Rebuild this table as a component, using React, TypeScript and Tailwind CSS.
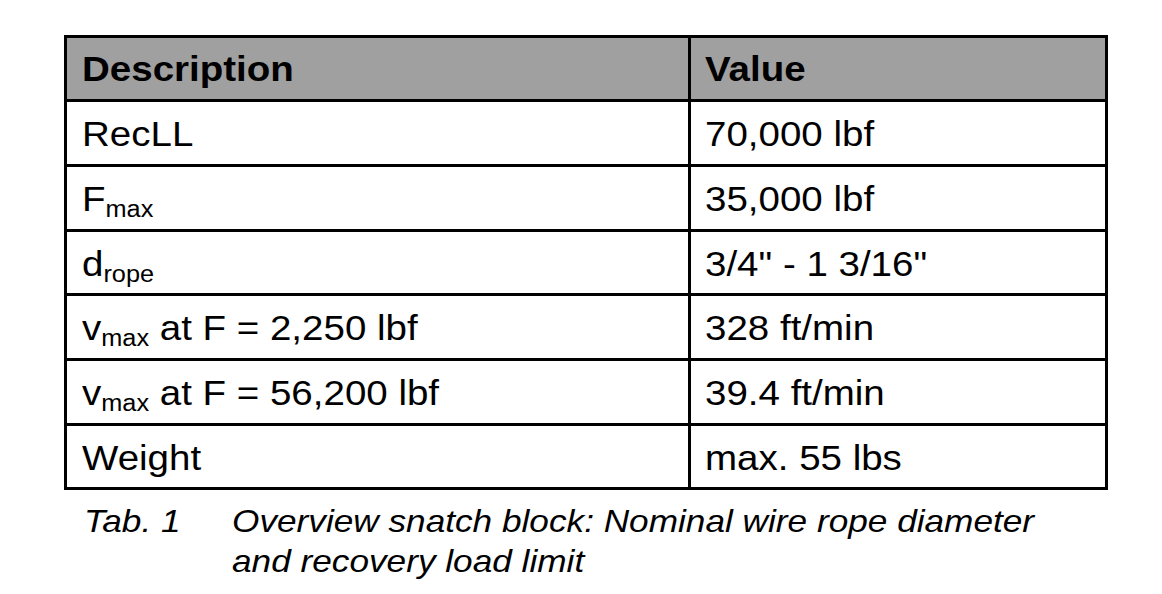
const rows: { label: React.ReactNode; value: string; h: string }[] = [
  { label: "RecLL", value: "70,000 lbf", h: "h-[65px]" },
  {
    label: (
      <>
        F<sub className="text-[23px]">max</sub>
      </>
    ),
    value: "35,000 lbf",
    h: "h-[65px]",
  },
  {
    label: (
      <>
        d<sub className="text-[23px]">rope</sub>
      </>
    ),
    value: '3/4" - 1 3/16"',
    h: "h-[64px]",
  },
  {
    label: (
      <>
        v<sub className="text-[23px]">max</sub> at F = 2,250 lbf
      </>
    ),
    value: "328 ft/min",
    h: "h-[65px]",
  },
  {
    label: (
      <>
        v<sub className="text-[23px]">max</sub> at F = 56,200 lbf
      </>
    ),
    value: "39.4 ft/min",
    h: "h-[65px]",
  },
  { label: "Weight", value: "max. 55 lbs", h: "h-[64px]" },
]

function Wide({ children }: { children: React.ReactNode }) {
  // source scan is stretched ~10% horizontally
  return <span className="inline-block origin-left scale-x-[1.1] whitespace-nowrap">{children}</span>
}

export default function App() {
  return (
    <div className="h-[594px] w-[1162px] bg-white pl-[64px] pt-[35px] font-['Liberation_Sans',Arial,sans-serif] text-black">
      <div className="w-[1044px] border-[3px] border-black text-[35px]">
        <div className="flex h-[61px] bg-[#a0a0a0] font-bold">
          <div className="flex w-[624px] items-center border-r-[3px] border-black pl-[15px] pt-[2px]">
            <Wide>Description</Wide>
          </div>
          <div className="flex flex-1 items-center pl-[14px] pt-[2px]">
            <Wide>Value</Wide>
          </div>
        </div>
        {rows.map((r, i) => (
          <div key={i} className={`flex border-t-[3px] border-black ${r.h}`}>
            <div className="flex w-[624px] items-center border-r-[3px] border-black pl-[15px] pt-[3px]">
              <Wide>{r.label}</Wide>
            </div>
            <div className="flex flex-1 items-center pl-[14px] pt-[3px]">
              <Wide>{r.value}</Wide>
            </div>
          </div>
        ))}
      </div>

      <div className="mt-[11px] flex pl-[20px] text-[32px] leading-[40px] italic">
        <div className="w-[148px] shrink-0">
          <Wide>Tab. 1</Wide>
        </div>
        <div>
          <Wide>Overview snatch block: Nominal wire rope diameter</Wide>
          <br />
          <Wide>and recovery load limit</Wide>
        </div>
      </div>
    </div>
  )
}
